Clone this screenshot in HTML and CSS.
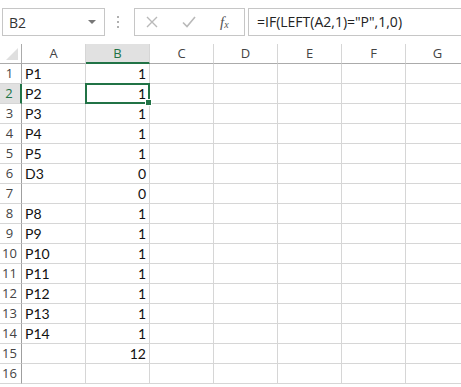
FILE: index.html
```html
<!DOCTYPE html>
<html lang="en">
<head>
    <meta charset="UTF-8">
    <title>Sheet</title>
    <link rel="stylesheet" href="styles.css">
</head>
<body>
    <div class="formula-bar">
        <div class="name-box">
            <span>B2</span>
            <svg class="arrow" width="8" height="5" viewBox="0 0 8 5"><path d="M0 0h8L4 4z" fill="#777"/></svg>
        </div>
        <div class="dots"><i></i><i></i><i></i></div>
        <div class="buttons">
            <svg width="12" height="12" viewBox="0 0 12 12"><path d="M1 1l10 10M11 1L1 11" stroke="#b9b9b9" stroke-width="1.4"/></svg>
            <svg width="14" height="12" viewBox="0 0 14 12"><path d="M1 6.5l4 4L13 1" stroke="#b9b9b9" stroke-width="1.6" fill="none"/></svg>
            <span class="fx">f<sub>x</sub></span>
        </div>
        <div class="formula">=IF(LEFT(A2,1)="P",1,0)</div>
    </div>

    <div class="sheet">
        <div class="row head">
            <div class="corner"></div>
            <div class="col">A</div>
            <div class="col active">B</div>
            <div class="col">C</div>
            <div class="col">D</div>
            <div class="col">E</div>
            <div class="col">F</div>
            <div class="col">G</div>
        </div>
        <div id="rows"></div>
    </div>

    <script>
        const data = [
            ['P1', 1], ['P2', 1], ['P3', 1], ['P4', 1], ['P5', 1], ['D3', 0], ['', 0],
            ['P8', 1], ['P9', 1], ['P10', 1], ['P11', 1], ['P12', 1], ['P13', 1], ['P14', 1],
            ['', 12], ['', '']
        ];
        const rows = document.getElementById('rows');
        data.forEach(function(d, i) {
            const row = document.createElement('div');
            row.className = 'row';
            let html = '<div class="num' + (i === 1 ? ' active' : '') + '">' + (i + 1) + '</div>';
            html += '<div class="cell">' + d[0] + '</div>';
            html += '<div class="cell right' + (i === 1 ? ' selected' : '') + '">' + d[1] + '</div>';
            for (let c = 0; c < 5; c++) html += '<div class="cell"></div>';
            row.innerHTML = html;
            rows.appendChild(row);
        });
    </script>
</body>
</html>
```

FILE: styles.css
```css
body {
    margin: 0;
    width: 461px;
    height: 387px;
    overflow: hidden;
    background: #fff;
    font-family: "Open Sans", sans-serif;
}
.formula-bar {
    display: flex;
    align-items: center;
    height: 44px;
    padding-left: 2px;
}
.name-box {
    display: flex;
    align-items: center;
    justify-content: space-between;
    box-sizing: border-box;
    width: 103px;
    height: 28px;
    border: 1px solid #c6c6c6;
    padding: 0 8px 0 6px;
    font-size: 14px;
    color: #333;
}
.dots {
    display: flex;
    flex-direction: column;
    gap: 3px;
    margin: 0 15px 0 12px;
}
.dots i {
    width: 2px;
    height: 2px;
    background: #b0b0b0;
}
.buttons {
    display: flex;
    align-items: center;
    box-sizing: border-box;
    width: 111px;
    height: 28px;
    border: 1px solid #c6c6c6;
    padding: 0 0 0 11px;
    gap: 24px;
}
.fx {
    font-family: "Liberation Serif", serif;
    font-style: italic;
    font-size: 15px;
    color: #555;
}
.fx sub {
    font-size: 10px;
    vertical-align: -1px;
}
.formula {
    flex: 1;
    box-sizing: border-box;
    height: 28px;
    margin-left: 3px;
    border: 1px solid #c6c6c6;
    border-right: none;
    padding: 3px 0 0 8px;
    font-size: 14px;
    color: #222;
}
.sheet {
    font-family: "Lato", sans-serif;
    font-size: 14px;
    color: #111;
}
.row {
    display: flex;
    height: 20px;
}
.row > div {
    box-sizing: border-box;
    flex: none;
    height: 20px;
    border-bottom: 1px solid #d6d6d6;
    border-right: 1px solid #d6d6d6;
}
.corner,
.num {
    width: 22px;
}
.corner {
    position: relative;
    border-right-color: #ababab !important;
    border-bottom-color: #ababab !important;
}
.corner::after {
    content: "";
    position: absolute;
    right: 3px;
    bottom: 3px;
    border-left: 12px solid transparent;
    border-bottom: 12px solid #dfdfdf;
}
.col {
    width: 64px;
    text-align: center;
    line-height: 19px;
    color: #444;
    font-family: "Open Sans", sans-serif;
    font-size: 13px;
    border-bottom-color: #ababab !important;
}
.col.active {
    background: #e1e1e1;
    color: #217346;
    border-bottom: 2px solid #217346 !important;
}
.num {
    text-align: center;
    line-height: 19px;
    color: #444;
    font-family: "Open Sans", sans-serif;
    font-size: 13px;
    padding-right: 2px;
    border-right-color: #9f9f9f !important;
}
.num.active {
    background: #e1e1e1;
    color: #217346;
    border-right: 2px solid #217346 !important;
}
.cell {
    width: 64px;
    line-height: 19px;
    padding: 0 3px;
}
.cell.right {
    text-align: right;
}
.selected {
    position: relative;
}
.selected::before {
    content: "";
    position: absolute;
    left: -1px;
    top: -1px;
    right: -1px;
    bottom: -1px;
    border: 2px solid #217346;
}
.selected::after {
    content: "";
    position: absolute;
    right: -3px;
    bottom: -3px;
    width: 5px;
    height: 5px;
    background: #217346;
    border: 1px solid #fff;
}
```
